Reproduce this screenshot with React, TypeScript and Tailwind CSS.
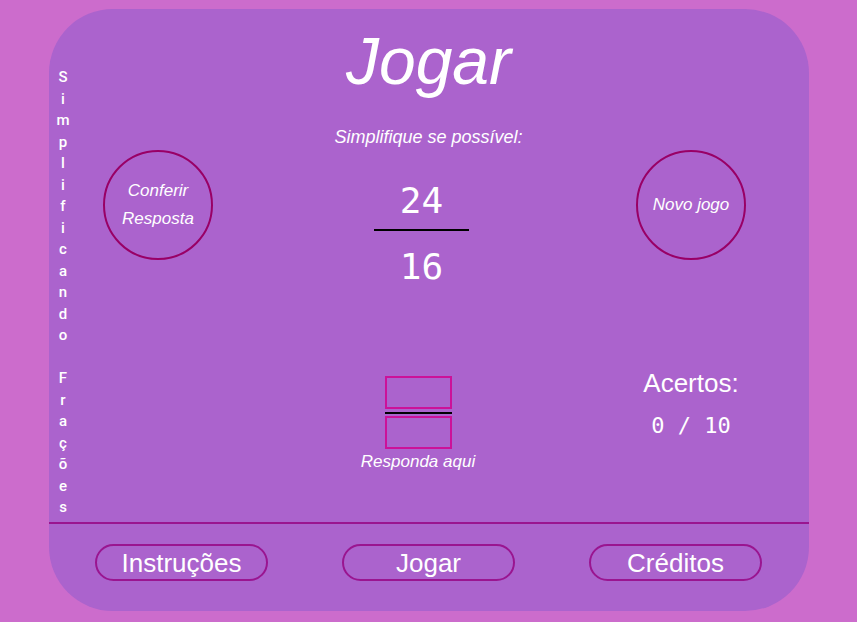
import React from 'react'

const sideTitle = 'Simplificando Frações'.split('')

function RoundButton({ lines }: { lines: string[] }) {
  return (
    <div className="w-[110px] h-[110px] rounded-full border-2 border-[#990066] flex flex-col items-center justify-center">
      {lines.map(l => (
        <span key={l} className="text-[17px] leading-[28px] italic text-white">{l}</span>
      ))}
    </div>
  )
}

function NavButton({ label }: { label: string }) {
  return (
    <button className="w-[173px] h-[37px] rounded-full border-2 border-[#9a1590] flex items-center justify-center text-[26px] leading-none text-white">
      {label}
    </button>
  )
}

export default function App() {
  return (
    <div className="h-screen w-full bg-[#cc6ccc] pt-[9px] pl-[49px] overflow-hidden" style={{ fontFamily: '"Liberation Sans", Arial, sans-serif' }}>
      <div className="w-[760px] h-[602px] rounded-[64px] bg-[#ab63cd] flex flex-col overflow-hidden">
        {/* parte de cima */}
        <div className="h-[513px] flex">
          {/* título vertical */}
          <div className="w-[28px] pt-[58px] flex flex-col items-center">
            {sideTitle.map((c, i) => (
              <span key={i} className="h-[21.5px] leading-[21.5px] text-[15px] font-medium text-white" style={{ fontFamily: 'Roboto, sans-serif' }}>
                {c === ' ' ? '\u00a0' : c}
              </span>
            ))}
          </div>

          {/* coluna esquerda */}
          <div className="w-[163px] pt-[141px] pl-[26px]">
            <RoundButton lines={['Conferir', 'Resposta']} />
          </div>

          {/* centro */}
          <div className="w-[377px] flex flex-col items-center text-white">
            <h1 className="mt-[17px] h-[70px] leading-[70px] text-[66px] italic">Jogar</h1>
            <p className="mt-[29px] h-[24px] leading-[24px] text-[18px] italic">Simplifique se possível:</p>

            <div className="mr-[14px] flex flex-col items-center" style={{ fontFamily: '"DejaVu Sans Mono", monospace' }}>
              <span className="mt-[32px] h-[40px] leading-[40px] text-[36px]">24</span>
              <div className="mt-[8px] w-[95px] h-[2px] bg-black" />
              <span className="mt-[16px] h-[40px] leading-[40px] text-[36px]">16</span>
            </div>

            <div className="mt-[89px] mr-[21px] flex flex-col items-center">
              <input className="w-[67px] h-[33px] border-2 border-[#cc1199] bg-transparent outline-none" />
              <div className="mt-[3px] w-[67px] h-[2px] bg-black" />
              <input className="mt-[2px] w-[67px] h-[33px] border-2 border-[#cc1199] bg-transparent outline-none" />
              <span className="mt-[1px] h-[24px] leading-[24px] text-[17px] italic whitespace-nowrap">Responda aqui</span>
            </div>
          </div>

          {/* coluna direita */}
          <div className="flex-1 pt-[141px] pl-[19px]">
            <div className="w-[110px] flex flex-col items-center text-white">
              <RoundButton lines={['Novo jogo']} />
              <span className="mt-[107px] h-[32px] leading-[32px] text-[26px] whitespace-nowrap">Acertos:</span>
              <span className="mt-[13px] h-[28px] leading-[28px] text-[22px] whitespace-pre" style={{ fontFamily: '"DejaVu Sans Mono", monospace' }}>0 / 10</span>
            </div>
          </div>
        </div>

        {/* menu */}
        <div className="flex-1 border-t-2 border-[#9a1590] pt-[20px] pl-[46px] flex gap-[74px]">
          <NavButton label="Instruções" />
          <NavButton label="Jogar" />
          <NavButton label="Créditos" />
        </div>
      </div>
    </div>
  )
}
